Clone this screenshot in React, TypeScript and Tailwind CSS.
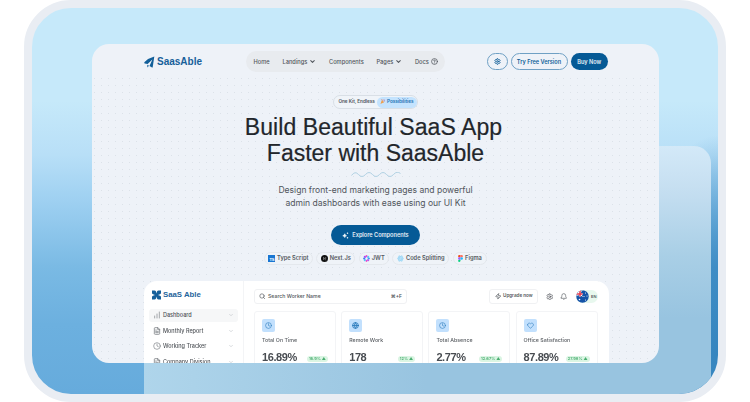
import type { ReactNode } from "react";
import {
  ChevronDown,
  CircleHelp,
  Settings,
  Search,
  Zap,
  Bell,
  Clock,
  Globe,
  Heart,
  FileText,
  ChartNoAxesColumnIncreasing,
} from "lucide-react";

const inter = "font-[family-name:Inter,'Liberation_Sans',sans-serif]";
const archivo = "font-[family-name:'Liberation_Sans',Arial,sans-serif]";

function PlaneLogo() {
  return (
    <svg className="h-[12px] w-[11px] shrink-0" viewBox="0 0 22 24" fill="#125f99">
      <path d="M20.6 1 17.4 22.5Q17.2 23.6 16 23L11 20.200 16.800 7.200 7.200 16.200 1.500 15Q-.2 13.500 1.200 12Q9 4 20.600 1Z" />
      <path d="M6.600 17.500 10 19.500 6.800 23Z" />
    </svg>
  );
}

function KnotLogo() {
  return (
    <svg className="h-[10px] w-[9px] shrink-0" viewBox="0 0 18 20" fill="#155f9a">
      <path d="M0 1h5q2 0 3 2l1 4 1-4q1-2 3-2h5v5q0 2-2 2.500L12 10l4 1.500q2 .5 2 2.500v5h-5q-2 0-3-2l-1-4-1 4q-1 2-3 2H0v-5q0-2 2-2.500L6 10 2 8.500Q0 8 0 6Z" />
    </svg>
  );
}

function Sparkles() {
  return (
    <svg className="h-[7px] w-[7px]" viewBox="0 0 14 14" fill="none" stroke="#fff" strokeWidth="1.300" strokeLinejoin="round">
      <path d="M5.500 3.500Q6 7 9 7.500 6 8 5.500 11 5 8 1.500 7.500 5 7 5.500 3.500Z" fill="#fff" />
      <path d="M11 1v3M9.500 2.500h3M11 10v3M9.500 11.500h3" />
    </svg>
  );
}

function TsMark() {
  return (
    <span className={`${archivo} flex h-[7px] w-[7px] items-end justify-end bg-[#1976d2] pr-[0.5px] text-[4px] font-bold leading-[4px] text-white`}>
      TS
    </span>
  );
}

function NextMark() {
  return (
    <svg className="h-[7px] w-[7px]" viewBox="0 0 14 14">
      <circle cx="7" cy="7" r="7" fill="#111" />
      <path d="M5 10V4.500l4.500 6M9.300 4v4" stroke="#bbb" strokeWidth="1" fill="none" />
    </svg>
  );
}

const petals = ["#ec4bc6", "#5cc8fa", "#3c9ff5", "#b05cf5", "#ec4bc6", "#5cc8fa", "#3c7cf5", "#a04cf5"];

function JwtMark() {
  return (
    <svg className="h-[7px] w-[7px]" viewBox="-7 -7 14 14">
      {petals.map((c, i) => (
        <ellipse key={i} cx="0" cy="-4.600" rx="2.100" ry="2.300" fill={c} transform={`rotate(${i * 45})`} />
      ))}
    </svg>
  );
}

function ReactMark() {
  return (
    <svg className="h-[7px] w-[7px]" viewBox="-7 -7 14 14" fill="#b5e1f9" stroke="#8fd0f3" strokeWidth="0.900">
      <ellipse rx="6.300" ry="2.600" />
      <ellipse rx="6.300" ry="2.600" transform="rotate(60)" />
      <ellipse rx="6.300" ry="2.600" transform="rotate(120)" />
    </svg>
  );
}

function FigmaMark() {
  return (
    <svg className="h-[7px] w-[5px]" viewBox="0 0 10 14">
      <path d="M5 0H2.500a2.350 2.350 0 0 0 0 4.700H5Z" fill="#f24e1e" />
      <path d="M5 0h2.500a2.350 2.350 0 0 1 0 4.700H5Z" fill="#ff7262" />
      <path d="M5 4.700H2.500a2.350 2.350 0 0 0 0 4.700H5Z" fill="#a259ff" />
      <circle cx="7.400" cy="7" r="2.350" fill="#1abcfe" />
      <path d="M5 9.300H2.500A2.350 2.350 0 1 0 5 11.600Z" fill="#0acf83" />
    </svg>
  );
}

function PartyMark() {
  return (
    <svg className="h-[5.500px] w-[5.500px] shrink-0" viewBox="0 0 12 12">
      <path d="M1 11 4 2l5 5Z" fill="#f0a04c" />
      <path d="M3 1l2 1M7 1 6 4M10 5 8 6" stroke="#df7a62" strokeWidth="1.500" />
      <circle cx="9.500" cy="2.500" r="1.200" fill="#a77bd0" />
    </svg>
  );
}

function FlagMark() {
  return (
    <svg className="h-[13px] w-[13px] shrink-0" viewBox="0 0 26 26">
      <clipPath id="flag">
        <circle cx="13" cy="13" r="12.500" />
      </clipPath>
      <g clipPath="url(#flag)">
        <rect width="26" height="26" fill="#1554a8" />
        <path d="M0 0 13 13M13 0 0 13" stroke="#fff" strokeWidth="2" />
        <path d="M8 0v13M0 8h13" stroke="#fff" strokeWidth="4.500" />
        <path d="M8 0v13M0 8h13" stroke="#e23b4e" strokeWidth="3" />
        <circle cx="7" cy="19" r="1.600" fill="#fff" />
        <circle cx="19" cy="6" r="1.100" fill="#fff" />
        <circle cx="22" cy="12" r="1.100" fill="#fff" />
        <circle cx="16" cy="13" r="1.100" fill="#fff" />
        <circle cx="19" cy="20" r="1.100" fill="#fff" />
      </g>
    </svg>
  );
}

function Header() {
  return (
    <header className="flex h-[35px] items-center pl-[52px]">
      <div className="flex w-[101.500px] items-center gap-[2px]">
        <PlaneLogo />
        <span className={`${archivo} text-[10px] font-bold text-[#17609a]`}>SaasAble</span>
      </div>
      <nav className="flex h-[21.500px] w-[199.500px] items-center rounded-full bg-[#e8ebef] pl-[8px] pt-[1px] text-[5.700px] font-medium text-[#51565c]">
        <span className="w-[29px]">Home</span>
        <span className="flex w-[46.500px] items-center gap-[2px]">
          Landings <ChevronDown size={7} strokeWidth={3.500} />
        </span>
        <span className="w-[47.500px]">Components</span>
        <span className="flex w-[38.500px] items-center gap-[2px]">
          Pages <ChevronDown size={7} strokeWidth={3.500} />
        </span>
        <span className="flex items-center gap-[2.500px]">
          Docs <CircleHelp size={7} strokeWidth={2.600} />
        </span>
      </nav>
      <div className="ml-[41.500px] flex h-[17px] text-[5.600px] font-semibold text-[#115f99]">
        <span className="flex w-[21px] items-center justify-center rounded-full border border-[#6fa0c4]">
          <Settings size={7} strokeWidth={3} />
        </span>
        <span className="ml-[3px] flex w-[57px] items-center justify-center rounded-full border border-[#6fa0c4] pt-[1px]">
          Try Free Version
        </span>
        <span className="ml-[3px] flex w-[37.500px] items-center justify-center rounded-full bg-[#055a96] pt-[1px] text-[#e6f0f7]">
          Buy Now
        </span>
      </div>
    </header>
  );
}

function Chip({ icon, label, width }: { icon: ReactNode; label: string; width: string }) {
  return (
    <span className={`flex h-[13px] ${width} items-center justify-center gap-[2px] whitespace-nowrap rounded-full border border-[#e4e8ed] bg-[#eff3f8]`}>
      {icon}
      {label}
    </span>
  );
}

function Hero() {
  return (
    <section className="flex flex-col items-center">
      <div className="mt-[16px] flex h-[14px] w-[85px] items-center rounded-full border border-[#d9dfe6] bg-[#f0f4f9] pl-[4.500px] text-[4.700px] font-semibold text-[#4f545b]">
        <span className="w-[38.500px] whitespace-nowrap tracking-[-0.050px]">One Kit, Endless</span>
        <span className="flex h-[11px] w-[39.500px] items-center justify-center gap-[1.500px] rounded-full bg-[#c4e3fe] tracking-[-0.050px] text-[#2273b4]">
          <PartyMark />
          Possibilities
        </span>
      </div>
      <h1 className={`${archivo} mt-[4.500px] whitespace-nowrap text-center text-[23px] leading-[26.400px] text-[#22262b] [-webkit-text-stroke:0.200px_#22262b]`}>
        <span className="mr-[4px] block tracking-[0.070px]">Build Beautiful SaaS App</span>
        <span className="block">Faster with SaasAble</span>
      </h1>
      <svg className="mt-[5.500px] h-[5px] w-[50px]" viewBox="0 0 50 5" fill="none" stroke="#a9cde0" strokeWidth="0.900">
        <path d="M.5 3.500Q4-1.500 7.500 2.500T14.500 2.500 21.500 2.500 28.500 2.500 35.500 2.500 42.500 2.500 49.500 1.500" />
      </svg>
      <p className="mt-[7.500px] whitespace-nowrap text-center text-[8.550px] leading-[12.400px] text-[#50555c]">
        Design front-end marketing pages and powerful
        <br />
        admin dashboards with ease using our UI Kit
      </p>
      <button className="mt-[16px] flex h-[20px] w-[89px] items-center justify-center gap-[3px] rounded-full bg-[#055a96] text-[5.600px] font-semibold text-[#e6f0f7]">
        <Sparkles />
        Explore Components
      </button>
      <div className="mt-[7px] flex gap-[3.500px] text-[5.700px] font-semibold text-[#555a61]">
        <Chip icon={<TsMark />} label="Type Script" width="w-[49px]" />
        <Chip icon={<NextMark />} label="Next.Js" width="w-[39px]" />
        <Chip icon={<JwtMark />} label="JWT" width="w-[30px]" />
        <Chip icon={<ReactMark />} label="Code Splitting" width="w-[57px]" />
        <Chip icon={<FigmaMark />} label="Figma" width="w-[34.500px]" />
      </div>
    </section>
  );
}

function SideRow({ icon, label, active }: { icon: ReactNode; label: string; active?: boolean }) {
  return (
    <div className={`flex h-[13px] shrink-0 items-center rounded-[3px] pl-[4px] pr-[4px] ${active ? "bg-[#f6f7f8]" : ""}`}>
      <span className="w-[10.500px] text-[#6f7479]">{icon}</span>
      <span className="flex-1 whitespace-nowrap">{label}</span>
      <ChevronDown size={6} strokeWidth={2} className="text-[#b4b9be]" />
    </div>
  );
}

function Sidebar() {
  return (
    <aside className="flex w-[100px] shrink-0 flex-col border-r border-[#f3f4f6] pl-[4.500px] pr-[5px] pt-[8.500px]">
      <div className="ml-[3.500px] flex h-[10px] items-center gap-[2px]">
        <KnotLogo />
        <span className={`${archivo} whitespace-nowrap text-[7.800px] font-bold text-[#1f649c]`}>SaaS Able</span>
      </div>
      <div className="mt-[9px] flex flex-col gap-[2.600px] text-[5.500px] font-medium text-[#4f5358] blur-[0.500px]">
        <SideRow active icon={<ChartNoAxesColumnIncreasing size={8} strokeWidth={1.800} />} label="Dashboard" />
        <SideRow icon={<FileText size={8} strokeWidth={2.200} />} label="Monthly Report" />
        <SideRow icon={<Clock size={8} strokeWidth={1.800} />} label="Working Tracker" />
        <SideRow icon={<FileText size={8} strokeWidth={2.200} />} label="Company Division" />
      </div>
    </aside>
  );
}

function Stat({ icon, label, value, change }: { icon: ReactNode; label: string; value: string; change: string }) {
  return (
    <div className="h-[60px] w-[82px] shrink-0 rounded-[3px] border border-[#f3f4f6] pl-[7px] pr-[7px] pt-[7px]">
      <span className="flex h-[13px] w-[13px] items-center justify-center rounded-[2px] bg-[#c2e0fd] text-[#2a7abb] blur-[0.300px]">{icon}</span>
      <p className="mt-[3.500px] whitespace-nowrap text-[5.300px] font-medium leading-[8px] text-[#5c6065] blur-[0.300px]">{label}</p>
      <div className="mt-[7px] flex items-center justify-between">
        <span className={`${archivo} text-[11px] font-bold leading-[12px] tracking-[-0.400px] text-[#484c51] blur-[0.500px]`}>{value}</span>
        <span className="mt-[4px] flex h-[6px] items-center rounded-full bg-[#daf5e3] px-[2px] text-[4px] font-semibold text-[#4bae71] blur-[0.700px]">
          {change} ▲
        </span>
      </div>
    </div>
  );
}

function Dashboard() {
  return (
    <section className="ml-[52px] mt-[16px] flex h-[90px] w-[465px] shrink-0 rounded-t-[13px] bg-white">
      <Sidebar />
      <div className="pl-[10px] pt-[8px]">
        <div className="flex h-[15px] items-center text-[5.200px] font-medium text-[#54585d]">
          <div className="flex h-full w-[153px] items-center rounded-[3px] border border-[#f0f1f3] pl-[4px] pr-[4px]">
            <Search size={6.500} strokeWidth={2.400} />
            <span className="ml-[2.500px] flex-1 whitespace-nowrap">Search Worker Name</span>
            <span className="text-[5px] font-semibold">⌘+F</span>
          </div>
          <div className="ml-[82px] flex h-full w-[49px] items-center gap-[2px] rounded-[3px] border border-[#f0f1f3] pl-[4.500px] text-[4.600px] font-semibold">
            <Zap size={6.500} strokeWidth={2.600} />
            <span className="whitespace-nowrap">Upgrade now</span>
          </div>
          <Settings size={7.500} strokeWidth={2.200} className="ml-[7.500px]" />
          <Bell size={7.500} strokeWidth={2} className="ml-[7px]" />
          <div className="ml-[8.500px] flex h-[13px] w-[22px] items-center gap-[2px] rounded-full bg-[#e8f8ee] text-[4px] font-semibold">
            <FlagMark />
            EN
          </div>
        </div>
        <div className="mt-[7px] flex gap-[5.200px]">
          <Stat icon={<Clock size={7} strokeWidth={2} />} label="Total On Time" value="16.89%" change="16.9%" />
          <Stat icon={<Globe size={7} strokeWidth={3} />} label="Remote Work" value="178" change="12%" />
          <Stat icon={<Clock size={7} strokeWidth={2} />} label="Total Absence" value="2.77%" change="12.67%" />
          <Stat icon={<Heart size={7} strokeWidth={2} />} label="Office Satisfaction" value="87.89%" change="27.98%" />
        </div>
      </div>
    </section>
  );
}

export default function App() {
  return (
    <main className={`${inter} flex h-[402px] w-[750px] justify-center overflow-hidden bg-white`}>
      <div className="relative h-[402px] w-[702px] overflow-hidden rounded-[47px] border-8 border-[#e9edf3] bg-[radial-gradient(ellipse_90px_220px_at_100%_90%,#3585bf_0%,#3f8dc5_40%,transparent_100%),linear-gradient(180deg,#c6e9fa_0%,#c6e9fa_24%,#b8dff7_38%,#9ed0f1_50%,#7abae4_67%,#6cb0df_82%,#66abdc_100%)]">
        <div className="absolute left-[112px] top-[138px] h-[260px] w-[567px] rounded-tr-[17px] bg-[linear-gradient(90deg,#afd5eb_0%,transparent_50%),linear-gradient(180deg,#d3e9f8_0%,#c6dff1_16%,#a9cfe6_42%,#98c4e0_66%,#98c4e0_100%)]" />
        <div className="relative ml-[60px] mt-[36px] flex h-[318.500px] w-[567px] flex-col overflow-hidden rounded-[17px] bg-[#eef2f8]">
          <div className="absolute inset-x-0 bottom-0 top-[31px] bg-[radial-gradient(circle_at_2.500px_3.500px,#dce2e9_0.500px,transparent_0.800px)] bg-[length:7px_7px]" />
          <div className="relative flex flex-col">
            <Header />
            <Hero />
            <Dashboard />
          </div>
        </div>
      </div>
    </main>
  );
}
